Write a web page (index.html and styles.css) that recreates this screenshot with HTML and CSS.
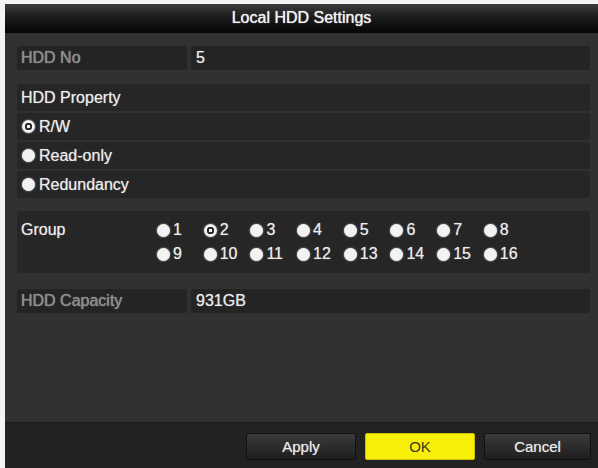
FILE: index.html
```html
<html>
  <head>
    <meta charset="utf-8">
    <link rel="stylesheet" href="styles.css">
  </head>
  <body>
    <div class="dialog">
      <div class="title">Local HDD Settings</div>
      <div class="content">
        <div class="row">
          <div class="cell label">HDD No</div>
          <div class="cell value">5</div>
        </div>

        <div class="section">
          <div class="line">HDD Property</div>
          <div class="line"><span class="radio on"></span>R/W</div>
          <div class="line"><span class="radio"></span>Read-only</div>
          <div class="line"><span class="radio"></span>Redundancy</div>
        </div>

        <div class="group">
          <div class="group-label">Group</div>
          <div class="group-grid">
            <div class="opt"><span class="radio"></span>1</div>
            <div class="opt"><span class="radio on"></span>2</div>
            <div class="opt"><span class="radio"></span>3</div>
            <div class="opt"><span class="radio"></span>4</div>
            <div class="opt"><span class="radio"></span>5</div>
            <div class="opt"><span class="radio"></span>6</div>
            <div class="opt"><span class="radio"></span>7</div>
            <div class="opt"><span class="radio"></span>8</div>
            <div class="opt"><span class="radio"></span>9</div>
            <div class="opt"><span class="radio"></span>10</div>
            <div class="opt"><span class="radio"></span>11</div>
            <div class="opt"><span class="radio"></span>12</div>
            <div class="opt"><span class="radio"></span>13</div>
            <div class="opt"><span class="radio"></span>14</div>
            <div class="opt"><span class="radio"></span>15</div>
            <div class="opt"><span class="radio"></span>16</div>
          </div>
        </div>

        <div class="row capacity">
          <div class="cell label">HDD Capacity</div>
          <div class="cell value">931GB</div>
        </div>
      </div>
      <div class="footer">
        <button class="btn">Apply</button>
        <button class="btn ok">OK</button>
        <button class="btn cancel">Cancel</button>
      </div>
    </div>
  </body>
</html>
```

FILE: styles.css
```css
body {
  margin: 0;
  background: #f4f4f4;
  font-family: "Liberation Sans", Arial, sans-serif;
  font-size: 16px;
  color: #ececec;
}

.dialog {
  margin: 4px 0 0 5px;
  width: 593px;
  height: 464px;
  background: #313131;
  display: flex;
  flex-direction: column;
}

.title {
  height: 29px;
  line-height: 28px;
  text-align: center;
  color: #f0f0f0;
  text-shadow: 0 0 1px #fff;
  background: linear-gradient(#3c3c3c, #1c1c1c 45%, #040404);
}

.content {
  flex: 1;
  padding: 13px 8px 0 12px;
}

/* label / value rows */
.row {
  display: flex;
  gap: 4px;
  height: 24px;
}

.cell {
  background: #242424;
  border-radius: 2px;
  line-height: 24px;
  padding-left: 4px;
  text-shadow: 0 0 1px rgba(255, 255, 255, 0.6);
}

.cell.label {
  width: 166px;
  color: #8c8c8c;
}

.cell.value {
  flex: 1;
  padding-left: 5px;
}

/* property section */
.section {
  margin-top: 14px;
  display: flex;
  flex-direction: column;
  gap: 2px;
}

.line {
  height: 27px;
  line-height: 27px;
  background: #262626;
  border-radius: 2px;
  padding-left: 4px;
  display: flex;
  align-items: center;
  text-shadow: 0 0 1px rgba(255, 255, 255, 0.6);
}

.line .radio {
  margin: 0 4px 0 1px;
}

.radio {
  display: inline-block;
  width: 13px;
  height: 13px;
  border-radius: 50%;
  background: #f2f2f2;
  box-shadow: 0 0 2px rgba(255, 255, 255, 0.7);
  flex: none;
}

.radio.on {
  background: radial-gradient(circle, #f2f2f2 0 1.5px, #2a2a2a 2px 3.5px, #f2f2f2 4px);
}

/* group picker */
.group {
  margin-top: 13px;
  height: 62px;
  background: #262626;
  border-radius: 3px;
  display: flex;
  padding: 10px 0 0 4px;
  box-sizing: border-box;
}

.group-label {
  width: 136px;
  line-height: 18px;
  text-shadow: 0 0 1px rgba(255, 255, 255, 0.6);
}

.group-grid {
  display: grid;
  grid-template-columns: repeat(8, 46.7px);
  row-gap: 6px;
  align-content: start;
}

.opt {
  display: flex;
  align-items: center;
  gap: 3px;
  height: 18px;
  text-shadow: 0 0 1px rgba(255, 255, 255, 0.6);
}

.capacity {
  margin-top: 16px;
}

/* buttons */
.footer {
  height: 46px;
  background: #222;
  display: flex;
  align-items: center;
  justify-content: flex-end;
  gap: 9px;
  padding-right: 7px;
  box-sizing: border-box;
  border-top: 1px solid #1a1a1a;
}

.btn {
  width: 110px;
  height: 27px;
  border: 1px solid #111;
  border-radius: 2px;
  background: linear-gradient(#3a3a3a, #1e1e1e);
  color: #e8e8e8;
  font-family: "Liberation Sans", Arial, sans-serif;
  font-size: 15px;
  text-shadow: 0 0 1px rgba(255, 255, 255, 0.6);
  margin-top: 1px;
}

.btn.ok {
  background: #f7ef08;
  color: #3a3a20;
  border-color: #c8c000;
  text-shadow: none;
}

.btn.cancel {
  width: 107px;
}
```
